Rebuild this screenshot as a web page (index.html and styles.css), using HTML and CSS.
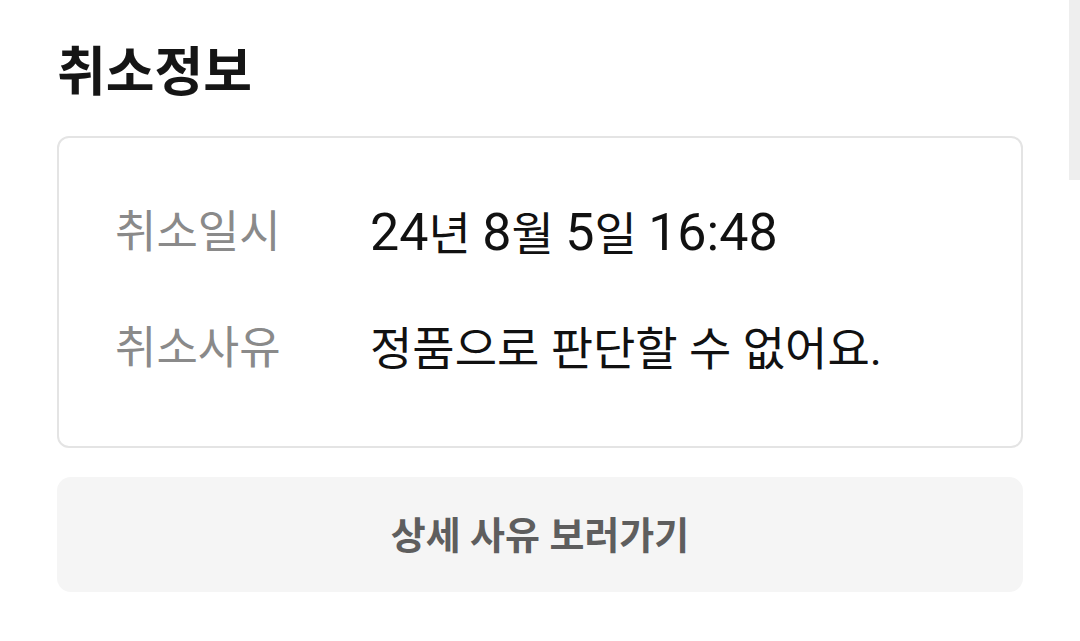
FILE: index.html
```html
<!DOCTYPE html>
<html lang="ko">
<head>
<meta charset="utf-8">
<link rel="stylesheet" href="styles.css">
</head>
<body>
<div class="page">
  <h1 class="title">취소정보</h1>
  <div class="card">
    <div class="row">
      <div class="label">취소일시</div>
      <div class="value"><span class="num">24</span>년 <span class="num">8</span>월 <span class="num">5</span>일 <span class="num">16:48</span></div>
    </div>
    <div class="row">
      <div class="label">취소사유</div>
      <div class="value">정품으로 판단할 수 없어요.</div>
    </div>
  </div>
  <button class="detail-btn">상세 사유 보러가기</button>
</div>
<div class="scroll-thumb"></div>
</body>
</html>
```
FILE: styles.css
```css
html, body {
  margin: 0;
  padding: 0;
  background: #ffffff;
}
body {
  font-family: Roboto, "Noto Sans CJK KR", sans-serif;
  color: #111111;
  overflow: hidden;
}
.page {
  padding: 39px 57px 0 57px;
  display: flex;
  flex-direction: column;
}
.title {
  margin: 0;
  font-size: 53px;
  font-weight: 700;
  line-height: 68px;
  color: #151515;
}
.card {
  margin-top: 29px;
  border: 2px solid #e4e4e4;
  border-radius: 12px;
  padding: 66px 56px 68px;
  display: flex;
  flex-direction: column;
  gap: 58px;
}
.row {
  display: flex;
  align-items: center;
  height: 58px;
}
.label {
  width: 255px;
  flex: none;
  font-size: 45px;
  color: #8a8a8a;
  line-height: 58px;
}
.value {
  font-size: 46px;
  color: #111111;
  line-height: 58px;
  white-space: nowrap;
}
.num {
  font-size: 52px;
}
.detail-btn {
  margin-top: 29px;
  height: 115px;
  border: none;
  border-radius: 14px;
  background: #f5f5f5;
  font-family: Roboto, "Noto Sans CJK KR", sans-serif;
  font-size: 38px;
  font-weight: 700;
  color: #5e5e5e;
  padding: 0 0 4px;
}
.scroll-thumb {
  position: absolute;
  top: 0;
  right: 0;
  width: 11px;
  height: 180px;
  background: #eeeeee;
}
```
